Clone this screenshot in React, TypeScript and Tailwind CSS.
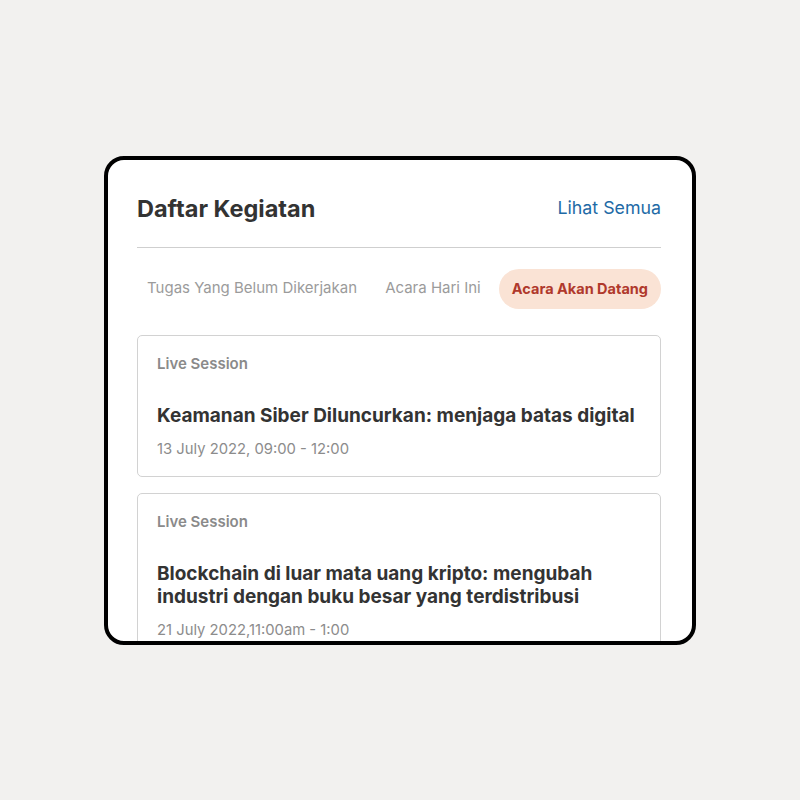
import React from 'react';

interface Activity {
  type: string;
  title: string;
  time: string;
}

const activities: Activity[] = [
  {
    type: 'Live Session',
    title: 'Keamanan Siber Diluncurkan: menjaga batas digital',
    time: '13 July 2022, 09:00 - 12:00',
  },
  {
    type: 'Live Session',
    title: 'Blockchain di luar mata uang kripto: mengubah industri dengan buku besar yang terdistribusi',
    time: '21 July 2022,11:00am - 1:00',
  },
];

const tabs = ['Tugas Yang Belum Dikerjakan', 'Acara Hari Ini', 'Acara Akan Datang'];

const ActivityCard: React.FC<{ item: Activity }> = ({ item }) => (
  <div className="border border-[#d2d2d2] rounded-[5px] pl-[19px] pr-[12px] pt-[18px] pb-[17px] shrink-0">
    <div className="text-[15px] leading-[20px] font-semibold text-[#8a8a8a]">{item.type}</div>
    <div className="mt-[30px] text-[19px] leading-[23px] font-bold text-[#333333]">{item.title}</div>
    <div className="mt-[12px] text-[14.8px] leading-[20px] text-[#8c8c8c]">{item.time}</div>
  </div>
);

export default function App() {
  const active = 2;

  return (
    <div
      className="min-h-screen w-full bg-[#f2f1ef] flex items-center justify-center"
      style={{ fontFamily: 'Inter, "Noto Sans", sans-serif' }}
    >
      <div className="w-[592px] h-[489px] bg-white border-4 border-black rounded-[20px] overflow-hidden pl-[29px] pr-[31px] pt-[33px] flex flex-col">
        {/* Header */}
        <div className="h-[32px] shrink-0 flex items-center justify-between">
          <h1 className="text-[23.5px] font-bold text-[#333333]">Daftar Kegiatan</h1>
          <a className="text-[17.8px] text-[#1e6aa6]">Lihat Semua</a>
        </div>
        <div className="mt-[22px] h-px shrink-0 bg-[#cfcfcf]" />

        {/* Tabs */}
        <div className="mt-[21px] shrink-0 flex items-center justify-between">
          {tabs.map((tab, i) =>
            i === active ? (
              <div
                key={tab}
                className="h-[40px] px-[13px] rounded-full bg-[#fae3d5] text-[#b0392c] font-bold text-[14.5px] flex items-center"
              >
                {tab}
              </div>
            ) : (
              <div key={tab} className="h-[40px] px-[10px] text-[#9b9b9b] text-[15px] flex items-center">
                {tab}
              </div>
            )
          )}
        </div>

        {/* List */}
        <div className="mt-[26px] flex flex-col gap-[16px]">
          {activities.map((item) => (
            <ActivityCard key={item.title} item={item} />
          ))}
        </div>
      </div>
    </div>
  );
}
